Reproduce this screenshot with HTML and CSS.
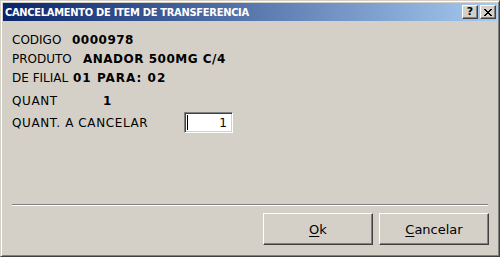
FILE: index.html
```html
<!DOCTYPE html>
<html>
<head>
<meta charset="utf-8">
<link rel="stylesheet" href="styles.css">
</head>
<body>
<div class="window">
  <div class="titlebar">
    <span class="title">CANCELAMENTO DE ITEM DE TRANSFERENCIA</span>
    <div class="tbtns">
      <div class="tbtn">?</div>
      <div class="tbtn">
        <svg width="8" height="7" viewBox="0 0 8 7"><path d="M0 0h2v1h1v1h2v-1h1v-1h2v1h-1v1h-1v1h-1v1h1v1h1v1h1v1h-2v-1h-1v-1h-2v1h-1v1h-2v-1h1v-1h1v-1h1v-1h-1v-1h-1v-1h-1z" fill="#000"/></svg>
      </div>
    </div>
  </div>
  <div class="content">
    <div class="fields">
      <div class="row r1"><span class="lbl w-cod">CODIGO</span><span class="val">0000978</span></div>
      <div class="row r2"><span class="lbl w-prod">PRODUTO</span><span class="val">ANADOR 500MG C/4</span></div>
      <div class="row r3"><span class="lbl w-fil">DE FILIAL</span><span class="val val-wide">01 PARA: 02</span></div>
      <div class="row r4"><span class="lbl lbl-wide w-qt">QUANT</span><span class="val">1</span></div>
      <div class="row r5"><span class="lbl lbl-wide w-canc">QUANT. A CANCELAR</span>
        <div class="input"><span class="caret"></span><span class="num">1</span></div>
      </div>
    </div>
    <div class="sep"></div>
    <div class="buttons">
      <div class="btn"><span><u>O</u>k</span></div>
      <div class="btn"><span><u>C</u>ancelar</span></div>
    </div>
  </div>
</div>
</body>
</html>
```
FILE: styles.css
```css
* { box-sizing: border-box; }
html, body { margin: 0; padding: 0; background: #d4d0c8; }
body { width: 500px; height: 257px; overflow: hidden; }

.window {
  width: 500px;
  height: 257px;
  background: #d4d0c8;
  border-top: 1px solid #d4d0c8;
  border-left: 1px solid #d4d0c8;
  border-right: 1px solid #404040;
  border-bottom: 1px solid #404040;
  box-shadow: inset 1px 1px 0 #ffffff, inset -1px -1px 0 #808080;
  padding: 2px 2px 3px 2px;
  display: flex;
  flex-direction: column;
}

.titlebar {
  height: 18px;
  background: linear-gradient(to right, #0a246a, #a6caf0);
  display: flex;
  align-items: center;
  justify-content: space-between;
  padding: 0 1px 0 2px;
}
.title {
  color: #fff;
  font-family: "DejaVu Sans Condensed", "DejaVu Sans", sans-serif;
  font-stretch: condensed;
  font-weight: bold;
  font-size: 11px;
  letter-spacing: -0.28px;
  white-space: nowrap;
}
.tbtns { display: flex; gap: 2px; }
.tbtn {
  width: 16px;
  height: 14px;
  background: #d4d0c8;
  border-top: 1px solid #fff;
  border-left: 1px solid #fff;
  border-right: 1px solid #404040;
  border-bottom: 1px solid #404040;
  box-shadow: inset -1px -1px 0 #808080;
  display: flex;
  align-items: center;
  justify-content: center;
  font-family: "DejaVu Sans", sans-serif;
  font-weight: bold;
  font-size: 11px;
  line-height: 12px;
  color: #000;
}

.content {
  flex: 1;
  display: flex;
  flex-direction: column;
  padding: 0 8px 0 9px;
}

.fields {
  display: flex;
  flex-direction: column;
  padding-top: 9px;
}
.row {
  display: flex;
  align-items: center;
  font-family: "DejaVu Sans", Verdana, sans-serif;
  font-size: 12px;
  color: #000;
  height: 19px;
}
.r3 { height: 20px; }
.r4 { height: 24px; padding-top: 2px; }
.r5 { height: 21px; }
.lbl { white-space: nowrap; }
.lbl-wide { letter-spacing: 0.6px; }
.w-cod { width: 60px; }
.w-prod { width: 71px; }
.w-fil { width: 61px; }
.w-qt { width: 91px; }
.w-canc { width: 172px; }
.val { font-weight: bold; white-space: nowrap; letter-spacing: 0.5px; }
.val-wide { letter-spacing: 1px; }

.input {
  width: 49px;
  height: 21px;
  background: #fff;
  border-top: 1px solid #808080;
  border-left: 1px solid #808080;
  border-right: 1px solid #ffffff;
  border-bottom: 1px solid #ffffff;
  box-shadow: inset 1px 1px 0 #404040, inset -1px -1px 0 #d4d0c8;
  display: flex;
  align-items: center;
  justify-content: space-between;
  padding: 0 5px 0 2px;
}
.caret { width: 1px; height: 15px; background: #000; }
.num { font-size: 12px; }

.sep {
  margin-top: 71px;
  margin-right: 1px;
  height: 2px;
  border-top: 1px solid #808080;
  border-bottom: 1px solid #ffffff;
}

.buttons {
  display: flex;
  justify-content: flex-end;
  gap: 6px;
  margin-top: 7px;
}
.btn {
  width: 110px;
  height: 32px;
  background: #d4d0c8;
  border-top: 1px solid #fff;
  border-left: 1px solid #fff;
  border-right: 1px solid #404040;
  border-bottom: 1px solid #404040;
  box-shadow: inset -1px -1px 0 #808080;
  display: flex;
  align-items: center;
  justify-content: center;
  font-family: "DejaVu Sans", Tahoma, sans-serif;
  font-size: 13px;
  color: #000;
}
.btn u { text-decoration-thickness: 1px; text-underline-offset: 2px; }
```
